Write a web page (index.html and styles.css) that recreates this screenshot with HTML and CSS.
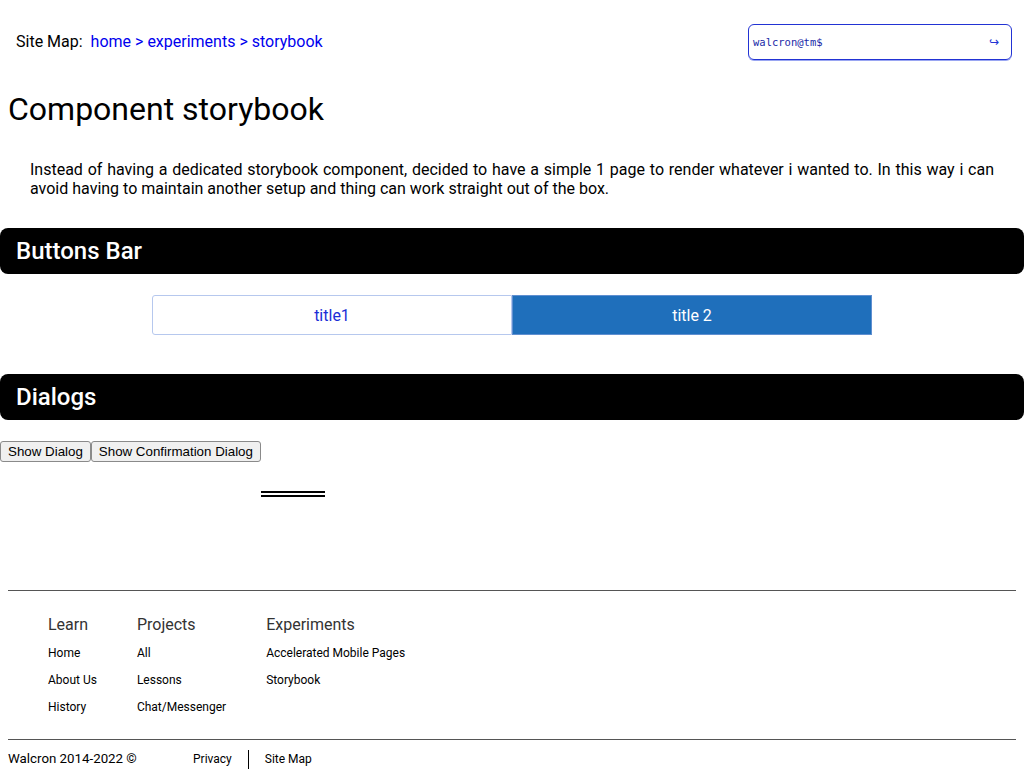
FILE: index.html
```html
<!DOCTYPE html>
<html>
<head>
<meta charset="utf-8">
<link rel="stylesheet" href="styles.css">
</head>
<body>
<header class="top">
  <nav class="crumbs">Site Map:<span class="trail"><a href="#">home</a> &gt; <a href="#">experiments</a> &gt; <a href="#">storybook</a></span></nav>
  <div class="term"><span class="prompt">walcron@tm$</span><span class="enter">↪</span></div>
</header>
<main class="main">
  <h1 class="title">Component storybook</h1>
  <p class="intro">Instead of having a dedicated storybook component, decided to have a simple 1 page to render whatever i wanted to. In this way i can avoid having to maintain another setup and thing can work straight out of the box.</p>

  <h2 class="section">Buttons Bar</h2>
  <div class="btnbar">
    <button class="seg seg-off">title1</button><button class="seg seg-on">title 2</button>
  </div>

  <h2 class="section section-dialogs">Dialogs</h2>
  <div class="dialog-btns"><button class="native">Show Dialog</button><button class="native">Show Confirmation Dialog</button></div>
  <div class="dlg-stub"></div>
</main>
<footer class="foot">
  <div class="cols">
    <div class="col">
      <h3 class="col-h">Learn</h3>
      <a href="#">Home</a>
      <a href="#">About Us</a>
      <a href="#">History</a>
    </div>
    <div class="col">
      <h3 class="col-h">Projects</h3>
      <a href="#">All</a>
      <a href="#">Lessons</a>
      <a href="#">Chat/Messenger</a>
    </div>
    <div class="col">
      <h3 class="col-h">Experiments</h3>
      <a href="#">Accelerated Mobile Pages</a>
      <a href="#">Storybook</a>
    </div>
  </div>
  <div class="bottom">
    <span class="copy">Walcron 2014-2022 ©</span>
    <a href="#" class="blink">Privacy</a>
    <a href="#" class="blink blink-sep">Site Map</a>
  </div>
</footer>
</body>
</html>
```
FILE: styles.css
```css
html, body {
  margin: 0;
  padding: 0;
  background: #fff;
}
body {
  font-family: Roboto, "Noto Sans", sans-serif;
  color: #000;
}
a {
  text-decoration: none;
}
.top {
  display: flex;
  justify-content: space-between;
  align-items: center;
  padding: 24px 12px 0 16px;
  height: 35px;
}
.crumbs {
  font-size: 16px;
}
.trail {
  margin-left: 8px;
  color: #0000ee;
}
.trail a {
  color: #0000ee;
}
.term {
  box-sizing: border-box;
  width: 264px;
  height: 36px;
  border: 1px solid #2233d4;
  border-radius: 6px;
  box-shadow: 0 1px 0 #9aa6f2;
  display: flex;
  align-items: center;
  justify-content: space-between;
  padding: 0 12px 0 4px;
  font-family: "DejaVu Sans Mono", monospace;
  font-size: 10.5px;
  color: #1a2aa8;
}
.enter {
  font-family: "DejaVu Sans", sans-serif;
  font-size: 12px;
  color: #2233d4;
}
.main {
  padding: 0 8px;
}
.title {
  margin: 31px 0 0;
  font-size: 32px;
  font-weight: 400;
  line-height: 38px;
}
.intro {
  margin: 32px 0 0;
  padding: 0 22px;
  font-size: 16px;
  line-height: 19px;
  text-align: justify;
}
.section {
  margin: 30px -8px 0;
  height: 46px;
  display: flex;
  align-items: center;
  padding: 0 16px;
  background: #000;
  color: #fff;
  border-radius: 8px;
  font-size: 24px;
  font-weight: 500;
}
.btnbar {
  display: flex;
  justify-content: center;
  margin-top: 21px;
}
.seg {
  box-sizing: border-box;
  width: 360px;
  height: 40px;
  font-family: Roboto, sans-serif;
  font-size: 16px;
  cursor: pointer;
  margin: 0;
}
.seg-off {
  background: #fff;
  color: #1a2ed6;
  border: 1px solid #b6c8ee;
  border-radius: 3px 0 0 3px;
}
.seg-on {
  background: #1f6fbb;
  color: #fff;
  border: 1px solid #5f8fd0;
  border-radius: 0;
}
.section-dialogs {
  margin-top: 39px;
}
.dialog-btns {
  display: flex;
  margin: 21px -8px 0;
}
.native {
  font-family: "Liberation Sans", Arial, sans-serif;
  font-size: 13.333px;
  height: 21px;
  padding: 1px 7px;
  margin: 0;
  border: 1px solid #8a8a8a;
  border-radius: 3px;
  background: #f0f0f0;
  color: #000;
}
.dlg-stub {
  margin: 29px 0 0 253px;
  width: 64px;
  border-top: 6px double #000;
}
.foot {
  margin: 93px 8px 0;
  border-top: 1px solid #555;
}
.cols {
  display: flex;
  gap: 40px;
  padding: 24px 40px 0;
  height: 124px;
}
.col {
  display: flex;
  flex-direction: column;
}
.col-h {
  margin: 0 0 6px;
  font-size: 16px;
  font-weight: 400;
  line-height: 19px;
  color: #333;
}
.col a {
  font-size: 12px;
  line-height: 27px;
  color: #000;
}
.bottom {
  border-top: 1px solid #555;
  display: flex;
  align-items: center;
  height: 36px;
  font-size: 12px;
}
.copy {
  width: 169px;
  font-size: 13.3px;
}
.blink {
  color: #000;
  padding: 0 16px;
  line-height: 19px;
  margin-top: 2px;
}
.blink-sep {
  border-left: 1px solid #000;
}
```
